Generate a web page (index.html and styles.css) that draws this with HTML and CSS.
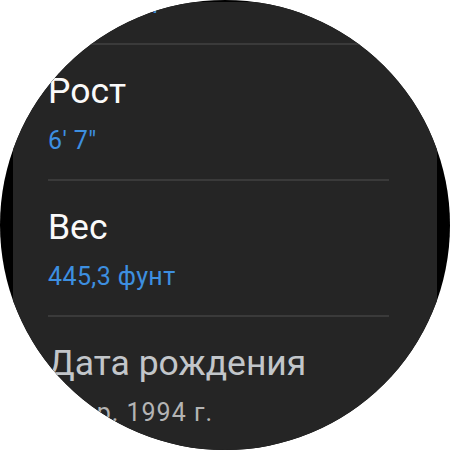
FILE: index.html
```html
<!DOCTYPE html>
<html lang="ru">
<head>
<meta charset="utf-8">
<title>Профиль</title>
<link rel="stylesheet" href="styles.css">
</head>
<body>
<div class="watch">
  <div class="screen">
    <div class="list">
      <div class="item">
        <div class="title">Пол</div>
        <div class="value">Мужской</div>
      </div>
      <div class="item">
        <div class="title">Рост</div>
        <div class="value">6' 7"</div>
      </div>
      <div class="item">
        <div class="title">Вес</div>
        <div class="value">445,3 фунт</div>
      </div>
      <div class="item item-dim">
        <div class="title">Дата рождения</div>
        <div class="value">февр. 1994 г.</div>
      </div>
    </div>
  </div>
</div>
</body>
</html>
```
FILE: styles.css
```css
html, body {
  margin: 0;
  padding: 0;
  background: #ffffff;
}

.watch {
  width: 450px;
  height: 450px;
  border-radius: 50%;
  background: #000000;
  overflow: hidden;
  display: flex;
  justify-content: center;
}

.screen {
  width: 424px;
  margin-top: 2px;
  background: #252525;
  box-sizing: border-box;
  padding: 0 48px 0 35px;
  overflow: hidden;
}

.list {
  margin-top: -93px;
  display: flex;
  flex-direction: column;
  font-family: Roboto, "Noto Sans", sans-serif;
}

.item {
  padding: 24px 0 22px;
  border-bottom: 2px solid #3a3a3a;
}

.item:last-child {
  border-bottom: none;
}

.title {
  font-size: 35.5px;
  line-height: 44px;
  color: #fafafa;
}

.value {
  margin-top: 12px;
  font-size: 25px;
  line-height: 32px;
  letter-spacing: 0.4px;
  color: #3d8fe0;
}

.item-dim .title {
  color: #c2c6ca;
}

.item-dim .value {
  color: #b4b4b4;
  letter-spacing: 1px;
}
```
